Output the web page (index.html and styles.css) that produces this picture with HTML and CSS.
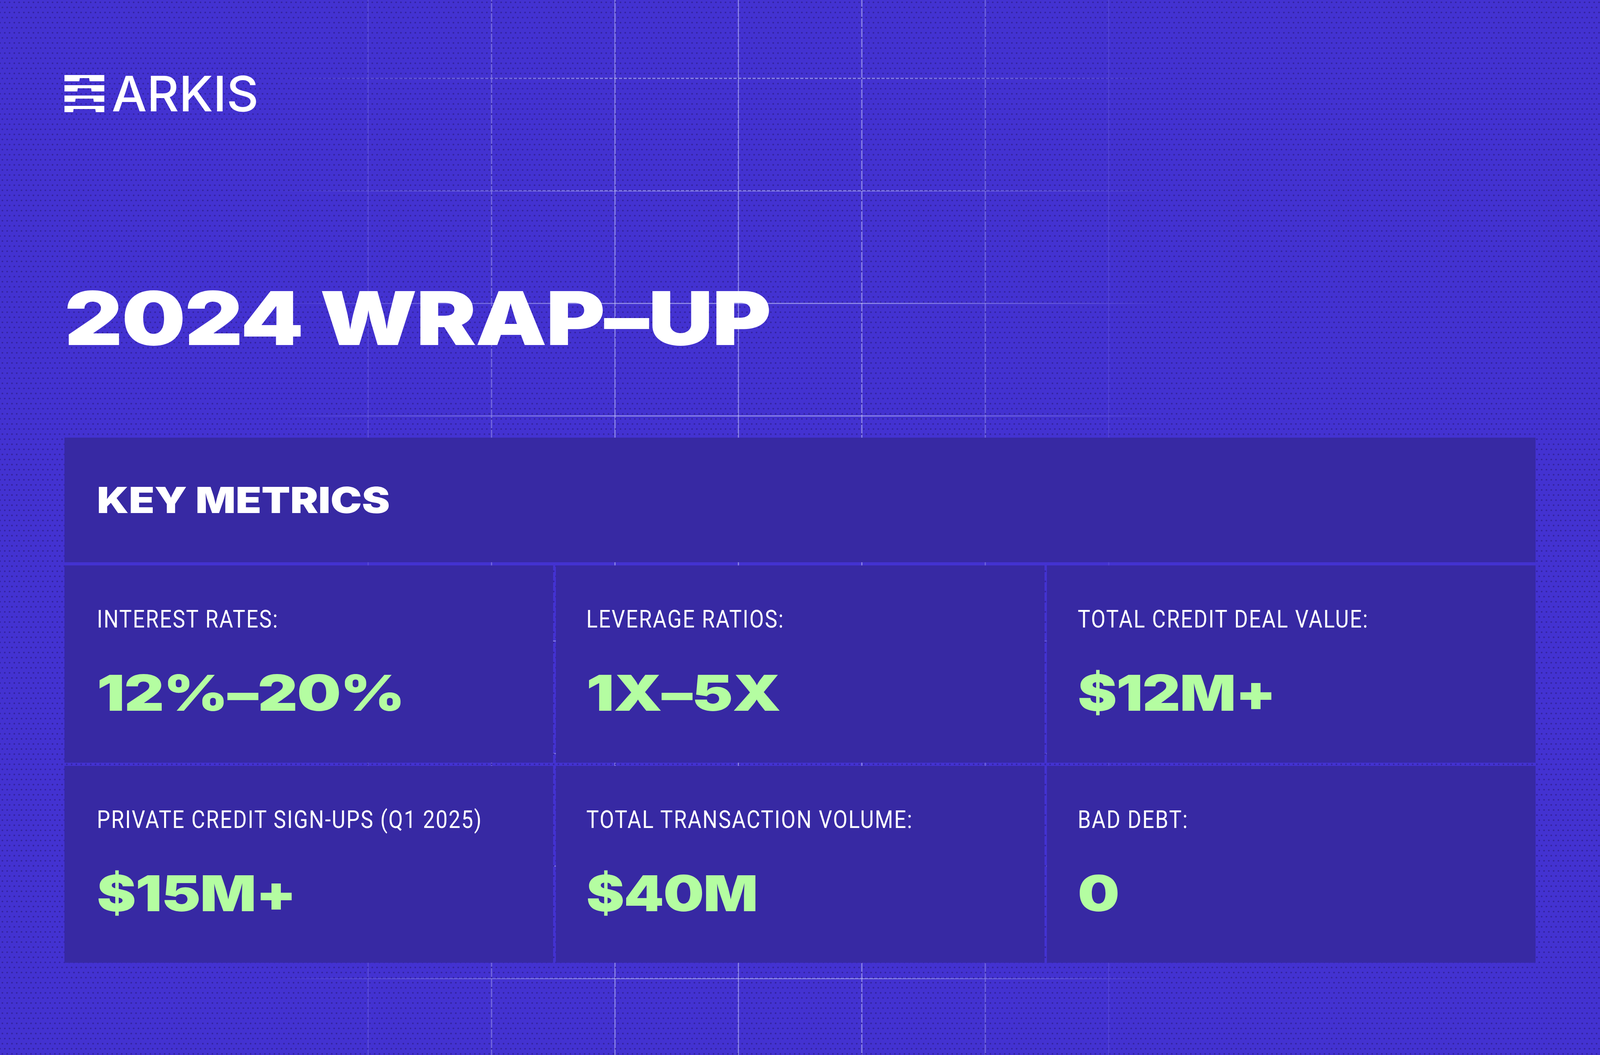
FILE: index.html
```html
<!DOCTYPE html>
<html lang="en">
<head>
<meta charset="utf-8">
<title>Arkis — 2024 Wrap-Up</title>
<link rel="stylesheet" href="styles.css">
</head>
<body>
<div class="page">
  <header class="brand">
    <svg class="brand-mark" viewBox="0 0 120 95" preserveAspectRatio="none" aria-hidden="true">
      <path d="M0 0H120V16H75.5L74 8H46L44.5 16H0Z"/>
      <path d="M0 26H120V42H81.5L80 34H40L38.5 42H0Z"/>
      <path d="M0 52.5H120V68.5H88L86.5 60.5H33.5L32 68.5H0Z"/>
      <path d="M0 79H120V95H94L92.5 87H27.5L26 95H0Z"/>
    </svg>
    <span class="brand-name"><span class="brand-stretch">ARKIS</span></span>
  </header>

  <h1 class="title"><span class="wide title-wide">2024 WRAP–UP</span></h1>

  <section class="metrics">
    <h2 class="metrics-head"><span class="wide head-wide">KEY METRICS</span></h2>

    <div class="cell">
      <p class="label">INTEREST RATES:</p>
      <p class="value"><span class="wide value-dash">12%–20%</span></p>
    </div>
    <div class="cell">
      <p class="label">LEVERAGE RATIOS:</p>
      <p class="value"><span class="wide value-dash">1X–5X</span></p>
    </div>
    <div class="cell">
      <p class="label">TOTAL CREDIT DEAL VALUE:</p>
      <p class="value"><span class="wide value-wide">$12M+</span></p>
    </div>
    <div class="cell">
      <p class="label">PRIVATE CREDIT SIGN-UPS (Q1 2025)</p>
      <p class="value"><span class="wide value-wide">$15M+</span></p>
    </div>
    <div class="cell">
      <p class="label">TOTAL TRANSACTION VOLUME:</p>
      <p class="value"><span class="wide value-wide value-narrow">$40M</span></p>
    </div>
    <div class="cell">
      <p class="label">BAD DEBT:</p>
      <p class="value"><span class="wide value-wide">0</span></p>
    </div>
  </section>
</div>
</body>
</html>
```

FILE: styles.css
```css
/* Slide designed on a 4800 x 2700 canvas; horizontal units follow the window width */
:root {
  --u: calc(100vw / 4800);
  --sx: 1;
  --bg: #4332d1;
  --bg-clear: rgba(67, 50, 209, 0);
  --dot: #33239f;
  --line: rgba(196, 198, 246, 0.55);
  --panel: #3729a3;
  --green: #b4fda1;
  --white: #ffffff;
}

/* horizontal compression when the window is narrower than the 4800px canvas */
@media (max-width: 4799px) {
  :root { --sx: 0.853333; }
}

html, body {
  margin: 0;
  padding: 0;
  background: var(--bg);
  overflow: hidden;
}

.page {
  box-sizing: border-box;
  width: 100vw;
  height: 2700px;
  padding: 177px calc(193 * var(--u)) 0;
  display: flex;
  flex-direction: column;
  overflow: hidden;
  color: var(--white);
  font-family: "Inter", "Liberation Sans", sans-serif;
  background:
    radial-gradient(circle, var(--dot) 0 1.7px, transparent 2.4px) 0 6px / calc(14.33 * var(--u)) 26px,
    radial-gradient(circle, var(--dot) 0 1.7px, transparent 2.4px) calc(7.17 * var(--u)) 19px / calc(14.33 * var(--u)) 26px,
    linear-gradient(90deg, var(--bg) 0%, var(--bg) 17%, var(--bg-clear) 38%, var(--bg-clear) 54%, var(--bg) 73%, var(--bg) 100%),
    linear-gradient(90deg, var(--line) 0 3px, transparent 3px) calc(362 * var(--u)) 0 / calc(370.3 * var(--u)) 100%,
    linear-gradient(180deg, var(--line) 0 3px, transparent 3px) 0 199px / 100% 288px,
    var(--bg);
}

/* brand */
.brand {
  display: flex;
  align-items: center;
  gap: calc(22 * var(--u));
  height: 125px;
}

.brand-mark {
  display: block;
  width: calc(120 * var(--u));
  height: 95px;
  fill: var(--white);
}

.brand-name {
  font-family: "Inter", "Liberation Sans", sans-serif;
  font-weight: 500;
  font-size: 125px;
  line-height: 1;
}

.brand-stretch {
  display: inline-block;
  transform: scaleX(calc(1.19 * var(--sx)));
  transform-origin: 0 50%;
}

/* stretched display type */
.wide {
  display: inline-block;
  white-space: nowrap;
  transform-origin: 0 50%;
}

.title {
  margin: 417px 0 0 0;
  font-weight: 900;
  font-size: 190px;
  line-height: 1;
  letter-spacing: -0.01em;
}

.title-wide { transform: scaleX(calc(1.42 * var(--sx))); }

/* metrics panel */
.metrics {
  margin-top: 211px;
  height: 1344px;
  display: grid;
  grid-template-columns: repeat(3, 1fr);
  grid-template-rows: 319px 1fr 1fr;
  row-gap: 8px;
  column-gap: calc(8 * var(--u));
}

.metrics-head {
  grid-column: 1 / -1;
  margin: 0;
  padding-left: calc(98 * var(--u));
  display: flex;
  align-items: center;
  background: var(--panel);
  font-weight: 900;
  font-size: 92px;
  line-height: 1;
}

.head-wide { transform: scaleX(calc(1.37 * var(--sx))); }

.cell {
  min-width: 0;
  background: var(--panel);
  padding: 106px calc(92 * var(--u)) 0;
}

.cell:nth-child(3n+2) {
  padding-left: calc(98 * var(--u));
}

.label {
  margin: 0;
  white-space: nowrap;
  font-family: "Roboto", "Liberation Sans", sans-serif;
  font-weight: 400;
  font-size: 63px;
  line-height: 63px;
  letter-spacing: 3px;
  color: var(--white);
  transform: scaleX(var(--sx));
  transform-origin: 0 50%;
}

.value {
  margin: 94px 0 0 0;
  font-weight: 900;
  font-size: 127px;
  line-height: 127px;
  color: var(--green);
  letter-spacing: -0.01em;
}

.value-wide { transform: scaleX(calc(1.39 * var(--sx))); }
.value-dash { transform: scaleX(calc(1.46 * var(--sx))); }
.value-narrow { transform: scaleX(calc(1.35 * var(--sx))); }
```
